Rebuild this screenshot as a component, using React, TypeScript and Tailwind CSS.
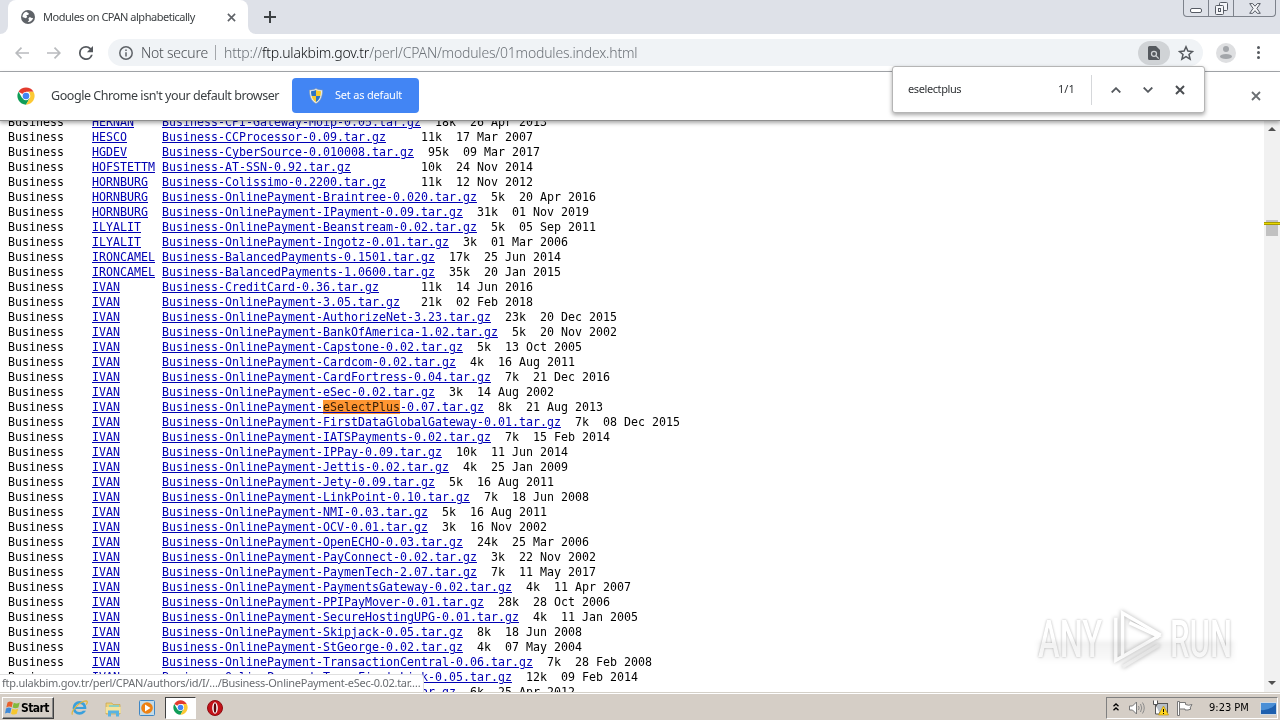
import React from "react";

type Entry = [author: string, file: string, size: string, date: string];

const P = "Business-OnlinePayment-";

const entries: Entry[] = [
  ["HERNAN", "Business-CPI-Gateway-Moip-0.05", "18k", "26 Apr 2013"],
  ["HESCO", "Business-CCProcessor-0.09", "11k", "17 Mar 2007"],
  ["HGDEV", "Business-CyberSource-0.010008", "95k", "09 Mar 2017"],
  ["HOFSTETTM", "Business-AT-SSN-0.92", "10k", "24 Nov 2014"],
  ["HORNBURG", "Business-Colissimo-0.2200", "11k", "12 Nov 2012"],
  ["HORNBURG", P + "Braintree-0.020", "5k", "20 Apr 2016"],
  ["HORNBURG", P + "IPayment-0.09", "31k", "01 Nov 2019"],
  ["ILYALIT", P + "Beanstream-0.02", "5k", "05 Sep 2011"],
  ["ILYALIT", P + "Ingotz-0.01", "3k", "01 Mar 2006"],
  ["IRONCAMEL", "Business-BalancedPayments-0.1501", "17k", "25 Jun 2014"],
  ["IRONCAMEL", "Business-BalancedPayments-1.0600", "35k", "20 Jan 2015"],
  ["IVAN", "Business-CreditCard-0.36", "11k", "14 Jun 2016"],
  ["IVAN", P + "3.05", "21k", "02 Feb 2018"],
  ["IVAN", P + "AuthorizeNet-3.23", "23k", "20 Dec 2015"],
  ["IVAN", P + "BankOfAmerica-1.02", "5k", "20 Nov 2002"],
  ["IVAN", P + "Capstone-0.02", "5k", "13 Oct 2005"],
  ["IVAN", P + "Cardcom-0.02", "4k", "16 Aug 2011"],
  ["IVAN", P + "CardFortress-0.04", "7k", "21 Dec 2016"],
  ["IVAN", P + "eSec-0.02", "3k", "14 Aug 2002"],
  ["IVAN", P + "eSelectPlus-0.07", "8k", "21 Aug 2013"],
  ["IVAN", P + "FirstDataGlobalGateway-0.01", "7k", "08 Dec 2015"],
  ["IVAN", P + "IATSPayments-0.02", "7k", "15 Feb 2014"],
  ["IVAN", P + "IPPay-0.09", "10k", "11 Jun 2014"],
  ["IVAN", P + "Jettis-0.02", "4k", "25 Jan 2009"],
  ["IVAN", P + "Jety-0.09", "5k", "16 Aug 2011"],
  ["IVAN", P + "LinkPoint-0.10", "7k", "18 Jun 2008"],
  ["IVAN", P + "NMI-0.03", "5k", "16 Aug 2011"],
  ["IVAN", P + "OCV-0.01", "3k", "16 Nov 2002"],
  ["IVAN", P + "OpenECHO-0.03", "24k", "25 Mar 2006"],
  ["IVAN", P + "PayConnect-0.02", "3k", "22 Nov 2002"],
  ["IVAN", P + "PaymenTech-2.07", "7k", "11 May 2017"],
  ["IVAN", P + "PaymentsGateway-0.02", "4k", "11 Apr 2007"],
  ["IVAN", P + "PPIPayMover-0.01", "28k", "28 Oct 2006"],
  ["IVAN", P + "SecureHostingUPG-0.01", "4k", "11 Jan 2005"],
  ["IVAN", P + "Skipjack-0.05", "8k", "18 Jun 2008"],
  ["IVAN", P + "StGeorge-0.02", "4k", "07 May 2004"],
  ["IVAN", P + "TransactionCentral-0.06", "7k", "28 Feb 2008"],
  ["IVAN", P + "TransFirsteLink-0.05", "12k", "09 Feb 2014"],
  ["IVAN", P + "USAePay-0.04", "6k", "25 Apr 2012"],
];

const QUERY = "eSelectPlus";

function FileLink({ name }: { name: string }) {
  const at = name.indexOf(QUERY);
  return (
    <a className="text-[#0000b4] underline underline-offset-1 decoration-1">
      {at < 0 ? (
        name
      ) : (
        <>
          {name.slice(0, at)}
          <mark className="bg-[#ff9632] text-[#3a2008]">{QUERY}</mark>
          {name.slice(at + QUERY.length)}
        </>
      )}
    </a>
  );
}

function Row({ entry }: { entry: Entry }) {
  const [author, base, size, date] = entry;
  const file = base + ".tar.gz";
  return (
    <div className="h-[15px] whitespace-pre leading-[15px]">
      {"Business    "}
      <a className="text-[#0000b4] underline underline-offset-1 decoration-1">{author}</a>
      {" ".repeat(10 - author.length)}
      <FileLink name={file} />
      {" ".repeat(Math.max(0, 35 - file.length) + 2)}
      {size}
      {"  "}
      {date}
    </div>
  );
}

function Cross({ className, w = 2 }: { className: string; w?: number }) {
  return (
    <svg viewBox="0 0 10 10" className={className} fill="none" stroke="currentColor" strokeWidth={w}>
      <path d="M1 1l8 8M9 1l-8 8" />
    </svg>
  );
}

function ChromeLogo({ className }: { className: string }) {
  return (
    <svg viewBox="0 0 48 48" className={className}>
      <circle cx="24" cy="24" r="23" fill="#fff" />
      <path d="M24 24L4.1 12.5A23 23 0 0 1 43.9 12.5H24z" fill="#e33b2e" />
      <path d="M4.1 12.5A23 23 0 0 0 24 47l10-17.2L24 24l-10 5.8z" fill="#109d58" />
      <path d="M43.9 12.5A23 23 0 0 1 24 47l10-17.2c3-6 1-13-4-17.3z" fill="#fcc934" />
      <circle cx="24" cy="24" r="11" fill="#fff" />
      <circle cx="24" cy="24" r="8.8" fill="#4285f4" />
    </svg>
  );
}

function TabStrip() {
  return (
    <div className="relative flex h-[34px] bg-[#dee1e8]">
      <div className="w-2 bg-white">
        <div className="h-full rounded-br-lg bg-[#dee1e8]" />
      </div>
      <div className="flex w-[240px] items-center rounded-t-lg bg-white pl-[13px]">
        <svg viewBox="0 0 14 14" className="size-[14px]">
          <circle cx="7" cy="7" r="7" fill="#5f6368" />
          <path d="M5.2 1.8C2.8 2.7 1.4 4.5 1.5 7l3.2 1.2 1.6-1.3-1-1.6 2.2-.5.2-1.6zM8.7 7.1l-1.4 1.6.9 1.4-1.5 2c2.8.2 4.9-1.6 5.4-4l-1.4-.2z" fill="#fff" />
        </svg>
        <span className="ml-2 w-[181px] whitespace-nowrap text-[11px] leading-[16px] tracking-[-0.48px] text-[#3c4043]">
          Modules on CPAN alphabetically
        </span>
        <Cross className="ml-[3px] size-[9px] text-[#5f6368]" w={1.8} />
      </div>
      <div className="w-2 bg-white">
        <div className="h-full rounded-bl-lg bg-[#dee1e8]" />
      </div>
      <svg viewBox="0 0 12 12" className="ml-2 mt-[11px] size-3 text-[#3c4043]" stroke="currentColor" strokeWidth="2">
        <path d="M6 0v12M0 6h12" />
      </svg>
      <div className="absolute left-[1183px] top-0 flex h-[17px] w-[93px] rounded-b border border-t-0 border-[#7d828b]">
        <div className="flex w-[25px] items-end justify-center border-r border-[#7d828b] pb-[3px]">
          <div className="h-[5px] w-3 rounded-[2px] border border-[#565b64] bg-white" />
        </div>
        <div className="flex w-[25px] items-center justify-center border-r border-[#7d828b]">
          <svg viewBox="0 0 13 13" className="size-[13px]" fill="#f4f5f8" stroke="#565b64">
            <rect x="4.5" y=".5" width="8" height="8" rx="1" />
            <rect x=".5" y="3.5" width="8" height="9" rx="1" />
            <rect x="3.5" y="6.5" width="2" height="3" />
          </svg>
        </div>
        <div className="flex flex-1 items-center justify-center">
          <svg viewBox="0 0 12 11" className="h-[11px] w-3" fill="#f4f5f8" stroke="#565b64">
            <path d="M.7.6h3L6 3.2 8.300.6h3L7.9 5.400l3.400 4.900h-3L6 7.700 3.700 10.300h-3L4.100 5.400z" />
          </svg>
        </div>
      </div>
    </div>
  );
}

function Toolbar() {
  return (
    <div className="flex h-[38px] items-center border-b border-[#a6a9ad] bg-white pl-[15px]">
      <svg viewBox="0 0 14 12" className="h-3 w-[14px]" fill="none" stroke="#b9bbbe" strokeWidth="1.7">
        <path d="M14 6H1.500M6.500.7L1.200 6l5.300 5.300" />
      </svg>
      <svg viewBox="0 0 14 12" className="ml-[18px] h-3 w-[14px]" fill="none" stroke="#b9bbbe" strokeWidth="1.7">
        <path d="M0 6h12.500M7.500.7L12.800 6l-5.300 5.300" />
      </svg>
      <svg viewBox="4 4 16 16" className="ml-[18px] size-[14px]" fill="#55595e">
        <path d="M17.650 6.350A7.960 7.960 0 0 0 12 4a8 8 0 1 0 7.730 10h-2.080A6 6 0 1 1 12 6c1.660 0 3.140.69 4.220 1.780L13 11h7V4z" />
      </svg>
      <div className="ml-[15px] flex h-[27px] w-[1095px] items-center rounded-full bg-[#f0f3f6] pl-[11px] text-[14px] font-light text-[#4b4f54]">
        <svg viewBox="0 0 14 14" className="size-[14px] shrink-0" fill="none" stroke="#5f6368" strokeWidth="1.500">
          <circle cx="7" cy="7" r="6.200" />
          <path d="M7 6.200v4.200M7 3.500v1.500" />
        </svg>
        <span className="-mt-px ml-2 w-[74px] whitespace-nowrap tracking-[-0.22px]">Not secure</span>
        <span className="h-[15px] w-px bg-[#a4a7ab]" />
        <span className="-mt-px ml-2 flex-1 whitespace-nowrap text-[#6c7177] tracking-[-0.19px]">
          http://<span className="text-[#101214]">ftp.ulakbim.gov.tr</span>/perl/CPAN/modules/01modules.index.html
        </span>
        <div className="flex h-6 w-8 items-center justify-center rounded-full bg-[#d0d3d6]">
          <svg viewBox="0 0 12 14" className="h-[14px] w-3">
            <path d="M1.500 0H8l4 4v8.500A1.500 1.500 0 0 1 10.500 14h-9A1.500 1.500 0 0 1 0 12.500v-11A1.500 1.500 0 0 1 1.500 0z" fill="#55595e" />
            <circle cx="6" cy="7.800" r="2.500" fill="none" stroke="#d0d3d6" strokeWidth="1.300" />
            <path d="M7.800 9.600l3 3" stroke="#d0d3d6" strokeWidth="1.300" />
          </svg>
        </div>
        <svg viewBox="0 0 16 16" className="ml-2 mr-[9px] size-4" fill="none" stroke="#55595e" strokeWidth="1.500">
          <path d="M8 1.800l1.900 4.300 4.600.4-3.500 3 1.100 4.600L8 11.700l-4.100 2.400L5 9.500l-3.500-3 4.600-.4z" />
        </svg>
      </div>
      <div className="ml-[13px] flex size-5 flex-col items-center rounded-full bg-[#dedfe1] pt-[3px]">
        <div className="size-[6px] rounded-full bg-[#a3a6aa]" />
        <div className="mt-[2px] h-[5px] w-3 rounded-[50%] bg-[#a3a6aa]" />
      </div>
      <div className="ml-[21px] flex flex-col gap-[2px]">
        <div className="size-[3px] rounded-full bg-[#55595e]" />
        <div className="size-[3px] rounded-full bg-[#55595e]" />
        <div className="size-[3px] rounded-full bg-[#55595e]" />
      </div>
    </div>
  );
}

function InfoBar() {
  return (
    <div className="relative z-10 flex h-[49px] items-center border-b border-[#8e8e8e] bg-white pl-[17px] shadow-[0_2px_4px_rgba(0,0,0,0.35)]">
      <ChromeLogo className="size-[18px]" />
      <span className="ml-4 w-[241px] whitespace-nowrap text-[12.500px] tracking-[-0.44px] text-[#3c4043]">
        Google Chrome isn't your default browser
      </span>
      <button className="-mt-px flex h-[35px] w-[127px] items-center rounded bg-[#4285f4] pl-4 text-[11px] text-white">
        <svg viewBox="0 0 16 16" className="size-4">
          <path d="M8 .5c2 1.200 4 1.500 6.500 1.500 0 6-1.500 11-6.500 13.500C3 13 1.500 8 1.500 2 4 2 6 1.700 8 .5z" fill="#e9eef2" stroke="#8d9aa5" strokeWidth=".6" />
          <path d="M8 2C6.500 2.800 5 3.100 3 3.200c0 1.700.2 3.200.6 4.800H8z" fill="#2d74c4" />
          <path d="M8 2c1.500.8 3 1.100 5 1.200 0 1.700-.2 3.200-.6 4.800H8z" fill="#f7cb2d" />
          <path d="M3.600 8H8v6c-2.200-1.200-3.700-3.200-4.400-6z" fill="#f7cb2d" />
          <path d="M12.400 8H8v6c2.200-1.200 3.700-3.200 4.400-6z" fill="#2d74c4" />
        </svg>
        <span className="ml-[11px] whitespace-nowrap tracking-[-0.2px]">Set as default</span>
      </button>
      <Cross className="ml-[832px] size-[10px] text-[#6a6e72]" w={1.800} />
    </div>
  );
}

function FindBar() {
  return (
    <div className="absolute left-[892px] top-[66px] z-20 flex h-[47px] w-[313px] items-center rounded-[3px] border border-[#b5b5b5] bg-white pl-[15px] text-[11px] text-[#303336] shadow-[0_2px_4px_rgba(0,0,0,0.35)]">
      <span className="w-[150px] tracking-[-0.4px]">eselectplus</span>
      <span className="w-[33px] whitespace-nowrap">1/1</span>
      <span className="h-[30px] w-px bg-[#d5d7da]" />
      <svg viewBox="0 0 10 6" className="ml-[19px] h-[6px] w-[10px]" fill="none" stroke="#55595e" strokeWidth="1.800">
        <path d="M.7 5.500L5 1.200l4.300 4.300" />
      </svg>
      <svg viewBox="0 0 10 6" className="ml-[22px] h-[6px] w-[10px]" fill="none" stroke="#55595e" strokeWidth="1.800">
        <path d="M.7.500L5 4.800 9.300.5" />
      </svg>
      <Cross className="ml-[22px] size-[10px] text-[#4a4d51]" w={2} />
    </div>
  );
}

function Watermark() {
  return (
    <div className="absolute left-[1038px] top-[489px] flex h-[60px] w-[196px] items-center font-['Roboto',sans-serif] text-[51px] font-medium leading-[60px] text-white [text-shadow:0_0_3px_rgba(0,0,0,0.32)]">
      <span className="w-[72px] origin-left scale-x-[0.640] whitespace-nowrap">ANY</span>
      <svg viewBox="0 0 58 64" className="h-16 w-[56px] shrink-0 overflow-visible drop-shadow-[0_0_2px_rgba(0,0,0,0.3)]" fill="none" stroke="#fff" strokeWidth="3.500">
        <path d="M13 50V4l38 22-3 4" />
        <path d="M6 9v44l9-5 35-20L20 14" />
        <path d="M13 60l38-23" stroke="#eee" />
      </svg>
      <span className="ml-1 w-[64px] origin-left scale-x-[0.610] whitespace-nowrap">RUN</span>
      <div className="absolute left-0 top-[31px] h-5 w-[196px] bg-gradient-to-b from-black/[0.06] to-black/[0.02] mix-blend-multiply blur-[2px]" />
    </div>
  );
}

function Scrollbar() {
  return (
    <div className="flex w-4 flex-col items-center bg-[#f1f1f1] pt-[6px]">
      <div className="border-x-4 border-b-4 border-x-transparent border-b-[#505050]" />
      <div className="relative mt-[89px] h-4 w-3 bg-[#c1c1c1]">
        <div className="absolute -left-[2px] top-[2px] h-[3px] w-4 border-y border-[#a89a00] bg-[#e8d800]" />
      </div>
      <div className="mt-auto mb-[7px] border-x-4 border-t-4 border-x-transparent border-t-[#505050]" />
    </div>
  );
}

function Page() {
  return (
    <div className="relative flex h-[571px] overflow-hidden bg-white">
      <div className="-mt-[6px] flex-1 pl-2 font-['DejaVu_Sans_Mono',monospace] text-[11.645px] text-black">
        {entries.map((e, i) => (
          <Row key={i} entry={e} />
        ))}
      </div>
      <Scrollbar />
      <Watermark />
      <div className="absolute bottom-0 left-0 flex h-[18px] w-[424px] items-center overflow-hidden whitespace-nowrap rounded-tr border-r border-t border-[#e0e0e0] bg-white pl-[2px] text-[11px] tracking-[-0.27px] text-[#6a6d71]">
        ftp.ulakbim.gov.tr/perl/CPAN/authors/id/I/…/Business-OnlinePayment-eSec-0.02.tar.…
      </div>
    </div>
  );
}

function Taskbar() {
  return (
    <div className="flex h-[28px] items-center border-t border-[#d4d0c8] bg-[#d5cec6] pl-[2px] shadow-[inset_0_1px_0_#fff] font-['DejaVu_Sans_Condensed','DejaVu_Sans',sans-serif]">
      <button className="mt-[2px] flex h-[22px] w-[52px] items-center border border-b-[#404040] border-l-white border-r-[#404040] border-t-white pl-[2px] shadow-[inset_-1px_-1px_0_#888]">
        <svg viewBox="0 0 16 16" className="size-4">
          <path d="M2.500 2.500C4.500 1 6 1.500 7.800 2.400L6.700 7.300C5 6.400 3.500 6.200 1.300 7.500z" fill="#e8602c" />
          <path d="M8.700 2.800c2 1 3.800 1 6-.2l-1.300 5c-2 1-3.700 1-5.800 0z" fill="#82b93c" />
          <path d="M1 8.500c2.300-1.300 3.700-1 5.400-.2l-1.200 5C3.500 12.500 2 12.300 0 13.500z" fill="#3f8ad8" />
          <path d="M7.300 8.700c2 1 3.800 1 5.800.1l-1.300 5c-2 1-3.700 1-5.800-.1z" fill="#f6c62e" />
        </svg>
        <span className="text-[12px] font-bold leading-none tracking-[-0.6px] text-black">Start</span>
      </button>
      <svg viewBox="0 0 18 18" className="ml-[17px] mt-[2px] size-[17px]" fill="none">
        <circle cx="9" cy="9.500" r="5.800" stroke="#3aa0dc" strokeWidth="3" />
        <path d="M4 9.500h11" stroke="#3aa0dc" strokeWidth="2.200" />
        <path d="M12 11.500h6" stroke="#d5cec6" strokeWidth="1.800" />
        <path d="M1.500 16.500C-.5 13 9 2.500 16 2c2 .2 1.200 2.600 0 4" stroke="#e3b63c" strokeWidth="1.300" />
      </svg>
      <svg viewBox="0 0 17 17" className="ml-[17px] mt-[3px] size-[17px]">
        <path d="M1 3h6l1 1.500h7V14H1z" fill="#ecd27c" stroke="#c9a548" strokeWidth=".7" />
        <path d="M4 5h10v3H4z" fill="#8fd0c0" />
        <path d="M.7 7h15v6h-15z" fill="#f5e39c" />
        <path d="M3 16.500v-6h11v6h-3v-3H6v3z" fill="#59b3e3" />
      </svg>
      <svg viewBox="0 0 16 16" className="ml-[17px] mt-[2px] size-4">
        <rect x=".5" y=".5" width="15" height="15" rx="1" fill="#c3dbe8" stroke="#3f86c4" />
        <circle cx="8" cy="8" r="5.800" fill="#ee8112" />
        <path d="M6 4.500v7L11.500 8z" fill="#fff" />
      </svg>
      <div className="ml-[10px] mt-[2px] flex h-[22px] w-[31px] items-center justify-center border border-b-white border-l-[#404040] border-r-white border-t-[#404040] bg-white">
        <ChromeLogo className="size-[15px]" />
      </div>
      <svg viewBox="0 0 16 16" className="ml-[11px] mt-[2px] size-4">
        <circle cx="8" cy="8" r="7.500" fill="#c41219" stroke="#8d0d12" />
        <ellipse cx="8" cy="8" rx="2.800" ry="5.800" fill="#fff" />
        <ellipse cx="8" cy="8" rx="1.300" ry="4.800" fill="#5b0609" />
      </svg>
      <div className="ml-auto mr-[2px] mt-[3px] flex h-[22px] w-[172px] items-center border border-b-white border-l-[#808080] border-r-white border-t-[#808080] pl-[6px]">
        <svg viewBox="0 0 6 8" className="mb-[3px] h-2 w-[6px]" fill="none" stroke="#000" strokeWidth="1.300">
          <path d="M.5 3.200L3 .9l2.500 2.300M.5 7.200L3 4.900l2.500 2.300" />
        </svg>
        <svg viewBox="0 0 16 14" className="ml-[10px] h-[14px] w-4" fill="none" stroke="#8b8b8b">
          <path d="M.5 5h3L7.500 1v12l-4-4h-3z" fill="#fff" stroke="#777" />
          <path d="M9.500 5q1.300 2 0 4M11.500 3q2.500 4 0 8M13.500 1.500q3.500 5.500 0 11" />
        </svg>
        <svg viewBox="0 0 17 16" className="ml-[7px] h-4 w-[17px]">
          <rect x="4.500" y="3.500" width="11" height="9" fill="#b7bfc7" stroke="#555" />
          <path d="M1.500.5v4h4v-4M3.500 4.500V14H8" fill="#fff" stroke="#555" />
          <path d="M11.500 6l5 9h-10z" fill="#ffd51e" stroke="#b58900" strokeWidth=".6" />
          <path d="M11.500 9v3M11.500 13v1" stroke="#000" />
        </svg>
        <svg viewBox="0 0 17 15" className="ml-[7px] h-[15px] w-[17px]" fill="#fff" stroke="#777">
          <path d="M3.500 1.500h6v2q3 1.500 6.500 0l-2 3.500 1 1q-3 1.500-6 1V8h-5.500" />
          <path d="M1.500.5h2v14h-2z" />
        </svg>
        <span className="ml-4 w-[50px] whitespace-nowrap text-[11px] text-black">9:23 PM</span>
        <svg viewBox="0 0 17 13" className="ml-px h-[13px] w-[17px]">
          <rect width="16" height="12" y=".5" x=".5" fill="#1d5fae" stroke="#cfd9e3" />
          <path d="M1 8Q9 9 16 2V1H1z" fill="#4a8fd6" />
        </svg>
      </div>
    </div>
  );
}

export default function App() {
  return (
    <div className="relative flex h-[720px] w-[1280px] flex-col overflow-hidden bg-white font-['Noto_Sans',sans-serif]">
      <TabStrip />
      <Toolbar />
      <InfoBar />
      <FindBar />
      <Page />
      <Taskbar />
    </div>
  );
}
